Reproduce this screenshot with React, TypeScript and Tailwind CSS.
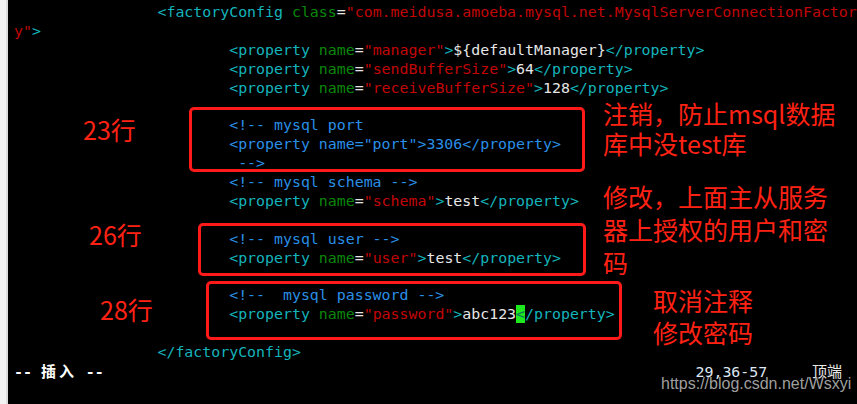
import type { ReactNode } from "react";

const T = ({ children }: { children: ReactNode }) => (
  <span className="text-[#14b4bc]">{children}</span>
);
const A = ({ children }: { children: ReactNode }) => (
  <span className="text-[#0a870a]">{children}</span>
);
const S = ({ children }: { children: ReactNode }) => (
  <span className="text-[#c20606]">{children}</span>
);
const C = ({ children }: { children: ReactNode }) => (
  <span className="text-[#2a8fe6]">{children}</span>
);

const sp = (n: number) => " ".repeat(n);

const Prop = ({ name, value }: { name: string; value: string }) => (
  <>
    {sp(24)}
    <T>&lt;property</T> <A>name</A>=<S>"{name}"</S>
    <T>&gt;</T>
    {value}
    <T>&lt;/property&gt;</T>
  </>
);

const Line = ({ children }: { children?: ReactNode }) => (
  <div className="h-[18.9px] whitespace-pre">{children}</div>
);

const Box = ({ className }: { className: string }) => (
  <div
    className={`absolute rounded-[5px] border-[3px] border-[#ff1a1a] ${className}`}
  />
);

export default function App() {
  return (
    <div className="flex w-[857px] h-[404px] overflow-hidden bg-black">
      <div className="w-[8px] shrink-0 bg-[#f2f2f2] border-r-2 border-[#dcdcdc]" />
      <div className="relative flex-1">
        <div className="pt-[3px] pl-[6px] font-['DejaVu_Sans_Mono',monospace] text-[14.9px] leading-[18.9px] text-[#e6e6e6]">
          <Line>
            {sp(16)}
            <T>&lt;factoryConfig</T> <A>class</A>=
            <S>"com.meidusa.amoeba.mysql.net.MysqlServerConnectionFactor</S>
          </Line>
          <Line>
            <S>y"</S>
            <T>&gt;</T>
          </Line>
          <Line>
            <Prop name="manager" value="${defaultManager}" />
          </Line>
          <Line>
            <Prop name="sendBufferSize" value="64" />
          </Line>
          <Line>
            <Prop name="receiveBufferSize" value="128" />
          </Line>
          <Line />
          <Line>
            {sp(24)}
            <C>&lt;!-- mysql port</C>
          </Line>
          <Line>
            {sp(24)}
            <C>&lt;property name="port"&gt;3306&lt;/property&gt;</C>
          </Line>
          <Line>
            {sp(25)}
            <C>--&gt;</C>
          </Line>
          <Line>
            {sp(24)}
            <C>&lt;!-- mysql schema --&gt;</C>
          </Line>
          <Line>
            <Prop name="schema" value="test" />
          </Line>
          <Line />
          <Line>
            {sp(24)}
            <C>&lt;!-- mysql user --&gt;</C>
          </Line>
          <Line>
            <Prop name="user" value="test" />
          </Line>
          <Line />
          <Line>
            {sp(24)}
            <C>&lt;!--  mysql password --&gt;</C>
          </Line>
          <Line>
            {sp(24)}
            <T>&lt;property</T> <A>name</A>=<S>"password"</S>
            <T>&gt;</T>abc123
            <span className="bg-[#1ee81e] text-[#0b6f5c]">&lt;</span>
            <T>/property&gt;</T>
          </Line>
          <Line />
          <Line>
            {sp(16)}
            <T>&lt;/factoryConfig&gt;</T>
          </Line>
          <Line>
            <span className="font-bold text-white">
              -- <span className="inline-block w-[36px] font-['Noto_Sans_CJK_SC',sans-serif] text-[15px] tracking-[3px]">插入</span> --
            </span>
            {sp(66)}
            <span className="text-[#dfe8f5]">29,36-57</span>
            {sp(5)}
            <span className="font-['Noto_Sans_CJK_SC',sans-serif] text-[15px] text-[#e8e8e8]">顶端</span>
          </Line>
        </div>

        <Box className="left-[181px] top-[107px] w-[396px] h-[65px]" />
        <Box className="left-[190px] top-[223px] w-[388px] h-[53px]" />
        <Box className="left-[198px] top-[281px] w-[416px] h-[59px]" />

        <div className="font-['Noto_Sans_CJK_SC',sans-serif] text-[25px] text-[#ff2214]">
          <p className="absolute left-[75px] top-[117px] leading-[25px]">23行</p>
          <p className="absolute left-[81px] top-[222px] leading-[25px]">26行</p>
          <p className="absolute left-[92px] top-[297px] leading-[25px]">28行</p>
          <div className="absolute left-[595px] top-[98px] leading-[30px]">
            <p>注销，防止msql数据</p>
            <p>库中没test库</p>
          </div>
          <div className="absolute left-[595px] top-[180px] leading-[33px]">
            <p>修改，上面主从服务</p>
            <p>器上授权的用户和密</p>
            <p>码</p>
          </div>
          <div className="absolute left-[645px] top-[284px] leading-[32px]">
            <p>取消注释</p>
            <p>修改密码</p>
          </div>
        </div>

        <p className="absolute left-[653px] top-[375px] font-['Liberation_Sans',Arial,sans-serif] text-[16px] leading-[18px] text-[#b4b4b4]/90">
          https://blog.csdn.net/Wsxyi
        </p>
      </div>
    </div>
  );
}
